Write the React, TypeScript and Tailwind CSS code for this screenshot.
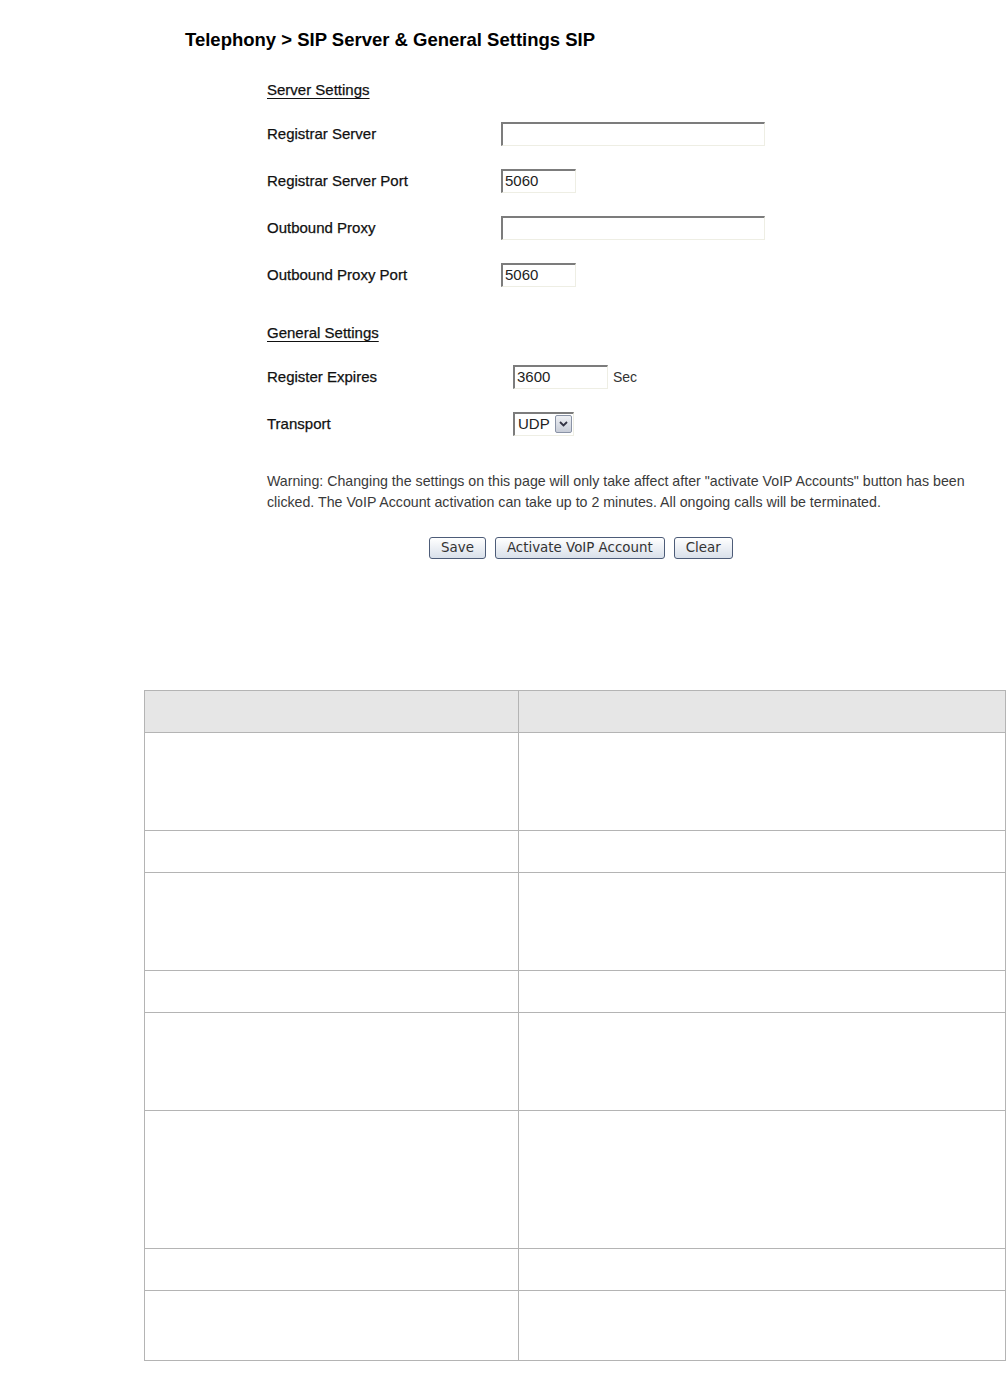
import React from "react"

const rowsServer = [
  { label: "Registrar Server", value: "", wide: true },
  { label: "Registrar Server Port", value: "5060", wide: false },
  { label: "Outbound Proxy", value: "", wide: true },
  { label: "Outbound Proxy Port", value: "5060", wide: false },
]

// table row heights, first is the grey header
const tableRows = [42, 98, 42, 98, 42, 98, 138, 42, 70]

function TextBox({ value, width }: { value: string; width: string }) {
  return (
    <div
      className={`${width} flex h-[24px] items-center border-t-2 border-l-2 border-r border-b border-t-[#7c7c7c] border-l-[#7c7c7c] border-r-[#eeeee4] border-b-[#eeeee4] bg-white pl-[2px] text-[15px] text-[#222]`}
    >
      {value}
    </div>
  )
}

function Heading({ children }: { children: React.ReactNode }) {
  return (
    <div className="flex h-[20px] items-center text-[15px] text-[#111] underline underline-offset-[3px] [-webkit-text-stroke:0.25px_#111]">
      {children}
    </div>
  )
}

function Btn({ children }: { children: React.ReactNode }) {
  return (
    <button className="h-[22px] rounded-[3px] border border-[#4d5c78] bg-gradient-to-b from-white to-[#d9e0ea] px-[11px] font-['DejaVu_Sans',sans-serif] text-[13.4px] leading-none text-[#333]">
      {children}
    </button>
  )
}

export default function App() {
  return (
    <div className="min-h-[1373px] w-[1008px] bg-white pt-[28px] font-['Liberation_Sans',Arial,sans-serif] text-[#111]">
      {/* Title */}
      <div className="pl-[185px] text-[18.5px] font-bold leading-[24px] text-black">
        Telephony &gt; SIP Server &amp; General Settings SIP
      </div>

      {/* Form */}
      <div className="mt-[28px] pl-[267px]">
        <Heading>Server Settings</Heading>
        <div className="mt-[10px]">
          {rowsServer.map((r) => (
            <div key={r.label} className="flex h-[47px] items-center">
              <div className="w-[234px] pt-[1px] text-[15px] [-webkit-text-stroke:0.25px_#111]">{r.label}</div>
              <TextBox value={r.value} width={r.wide ? "w-[264px]" : "w-[75px]"} />
            </div>
          ))}
        </div>

        <div className="mt-[25px]">
          <Heading>General Settings</Heading>
        </div>
        <div className="mt-[10px]">
          <div className="flex h-[47px] items-center">
            <div className="w-[246px] pt-[1px] text-[15px] [-webkit-text-stroke:0.25px_#111]">Register Expires</div>
            <TextBox value="3600" width="w-[95px]" />
            <span className="ml-[5px] pt-[2px] text-[14px] text-[#333]">Sec</span>
          </div>
          <div className="flex h-[47px] items-center">
            <div className="w-[246px] pt-[1px] text-[15px] [-webkit-text-stroke:0.25px_#111]">Transport</div>
            <div className="flex h-[24px] w-[61px] items-center border-t-2 border-l-2 border-r border-b border-t-[#7c7c7c] border-l-[#7c7c7c] border-r-[#eeeee4] border-b-[#eeeee4] bg-white pl-[3px] text-[15px] text-[#222]">
              <span className="flex-1">UDP</span>
              <span className="mr-[1px] flex h-[18px] w-[17px] items-center justify-center rounded-[2px] border border-[#8a93a6] bg-gradient-to-b from-[#eef0f4] to-[#c8cdd8]">
                <svg width="9" height="6" viewBox="0 0 9 6">
                  <path d="M1 1 L4.5 4.5 L8 1" fill="none" stroke="#334" strokeWidth="1.8" />
                </svg>
              </span>
            </div>
          </div>
        </div>

        <p className="mt-[24px] text-[14.2px] leading-[21px] text-[#3a3a3a]">
          Warning: Changing the settings on this page will only take affect after "activate VoIP Accounts" button has been
          <br />
          clicked. The VoIP Account activation can take up to 2 minutes. All ongoing calls will be terminated.
        </p>
      </div>

      <div className="mt-[24px] flex justify-start gap-[9px] pl-[429px]">
        <Btn>Save</Btn>
        <Btn>Activate VoIP Account</Btn>
        <Btn>Clear</Btn>
      </div>

      {/* Empty table */}
      <div className="ml-[144px] mt-[131px] w-[862px] border-t border-l border-[#b4b4b4]">
        {tableRows.map((h, i) => (
          <div
            key={i}
            className={`grid grid-cols-[374px_1fr] ${i === 0 ? "bg-[#e6e6e6]" : "bg-white"}`}
            style={{ height: h }}
          >
            <div className="border-r border-b border-[#b4b4b4]" />
            <div className="border-r border-b border-[#b4b4b4]" />
          </div>
        ))}
      </div>
    </div>
  )
}
